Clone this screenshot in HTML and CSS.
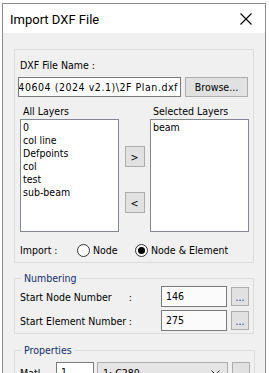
FILE: index.html
```html
<!DOCTYPE html>
<html lang="en">
<head>
  <meta charset="UTF-8">
  <title>Import DXF File</title>
  <link rel="stylesheet" href="styles.css">
</head>
<body>
  <div class="dialog">
    <!-- Title bar -->
    <div class="titlebar">
      <span class="title">Import DXF File</span>
      <svg class="close" width="12" height="12" viewBox="0 0 12 12">
        <path d="M0.5 0.5 L11.5 11.5 M11.5 0.5 L0.5 11.5" stroke="#000" stroke-width="1.1" fill="none"/>
      </svg>
    </div>

    <div class="client">
      <!-- File + layers -->
      <div class="group file-group">
        <div class="label file-label">DXF File Name :</div>
        <div class="file-row">
          <div class="edit file-path"><span>D:\MIDAS\Project\20240604 (2024 v2.1)\2F Plan.dxf</span></div>
          <button class="btn browse">Browse...</button>
        </div>

        <div class="layers">
          <div class="label layer-label">All Layers</div>
          <div></div>
          <div class="label layer-label">Selected Layers</div>

          <ul class="listbox">
            <li>0</li>
            <li>col line</li>
            <li>Defpoints</li>
            <li>col</li>
            <li>test</li>
            <li>sub-beam</li>
          </ul>
          <div class="move-btns">
            <button class="btn move">&gt;</button>
            <button class="btn move">&lt;</button>
          </div>
          <ul class="listbox">
            <li>beam</li>
          </ul>
        </div>

        <div class="import-row">
          <span class="import-label">Import :</span>
          <span class="radio radio-node"><span class="circle"></span>Node</span>
          <span class="radio radio-elem"><span class="circle checked"></span>Node &amp; Element</span>
        </div>
      </div>

      <!-- Numbering -->
      <fieldset class="group numbering">
        <legend>Numbering</legend>
        <div class="num-row">
          <span class="num-label"><span>Start Node Number</span><span>:</span></span>
          <div class="edit num-edit">146</div>
          <button class="btn dots">...</button>
        </div>
        <div class="num-row">
          <span class="num-label"><span>Start Element Number</span><span>:</span></span>
          <div class="edit num-edit">275</div>
          <button class="btn dots">...</button>
        </div>
      </fieldset>

      <!-- Properties -->
      <fieldset class="group properties">
        <legend>Properties</legend>
        <div class="prop-row">
          <span class="prop-label">Matl</span>
          <div class="edit matl-edit">1</div>
          <div class="combo">
            <span>1: C280</span>
            <svg width="9" height="6" viewBox="0 0 9 6">
              <path d="M0.5 0.5 L4.5 4.5 L8.5 0.5" stroke="#333" fill="none"/>
            </svg>
          </div>
          <button class="btn dots"></button>
        </div>
      </fieldset>
    </div>
  </div>
</body>
</html>
```

FILE: styles.css
```css
html, body {
  margin: 0;
  padding: 0;
  background-color: #fff;
  overflow: hidden;
}

body {
  font-family: "DejaVu Sans Condensed", "DejaVu Sans", sans-serif;
  font-stretch: condensed;
  font-size: 10.5px;
  color: #000;
  height: 373px;
}

.dialog {
  margin: 3px 0 0 2px;
  width: 264px;
  height: 370px;
  border: 1px solid #8c8c8c;
  border-bottom: none;
  box-sizing: border-box;
  background-color: #f0f0f0;
  overflow: hidden;
}

/* Title bar */
.titlebar {
  height: 29px;
  background-color: #fff;
  display: flex;
  align-items: center;
  justify-content: space-between;
  padding: 0 13px 0 7px;
}

.title {
  font-family: Roboto, sans-serif;
  font-stretch: normal;
  font-size: 13px;
  margin-top: 1px;
}

/* Client area */
.client {
  padding: 16px 0 0 11px;
}

.label {
  line-height: 14px;
  height: 14px;
}

.group {
  width: 240px;
  box-sizing: border-box;
  border: 1px solid #dcdcdc;
  margin: 0;
}

.file-group {
  padding: 8px 5px 4px 3px;
}

.file-label {
  margin-left: 2px;
}

.file-row {
  display: flex;
  gap: 4px;
  margin-top: 5px;
}

.edit {
  box-sizing: border-box;
  border: 1px solid #7a7a7a;
  background-color: #fff;
  height: 20px;
  line-height: 18px;
  white-space: nowrap;
  overflow: hidden;
}

.file-path {
  width: 163px;
  display: flex;
  justify-content: flex-end;
  padding-right: 2px;
  letter-spacing: 0.55px;
}

.btn {
  font-family: inherit;
  font-stretch: inherit;
  font-size: 10.5px;
  color: #000;
  background-color: #e1e1e1;
  border: 1px solid #adadad;
  box-sizing: border-box;
  padding: 0;
  margin: 0;
}

.browse {
  width: 63px;
  height: 20px;
}

/* Layer lists */
.layers {
  display: grid;
  grid-template-columns: 99px 31px 99px;
  grid-template-rows: 14px 113px;
  row-gap: 1px;
  margin: 7px 0 0 2px;
}

.layer-label {
  margin-left: 3px;
}

.listbox {
  list-style: none;
  margin: 0;
  padding: 1px 0 0 2px;
  box-sizing: border-box;
  border: 1px solid #828790;
  background-color: #fff;
  height: 113px;
}

.listbox li {
  line-height: 13px;
  height: 13px;
}

.move-btns {
  display: flex;
  flex-direction: column;
  align-items: center;
  gap: 25px;
  padding-top: 27px;
}

.move {
  width: 20px;
  height: 21px;
}

/* Import radio row */
.import-row {
  display: flex;
  align-items: center;
  height: 16px;
  margin: 10px 0 0 2px;
}

.import-label {
  width: 57px;
}

.radio {
  display: flex;
  align-items: center;
}

.radio-node {
  width: 58px;
}

.circle {
  width: 13px;
  height: 13px;
  box-sizing: border-box;
  border: 1px solid #333;
  border-radius: 50%;
  background-color: #fff;
  margin-right: 3px;
  display: flex;
  align-items: center;
  justify-content: center;
}

.circle.checked::after {
  content: "";
  width: 7px;
  height: 7px;
  border-radius: 50%;
  background-color: #000;
}

/* Group boxes with captions */
fieldset.group {
  padding: 0 4px 3px 5px;
}

fieldset.group legend {
  padding: 0 2px;
  margin-left: 2px;
  line-height: 14px;
  color: #142f6e;
}

.numbering {
  margin-top: 8px;
  height: 63px;
}

.num-row {
  display: flex;
  align-items: center;
  height: 21px;
  margin-top: 3px;
}

.num-row:first-of-type {
  margin-top: 1px;
}

.num-label {
  width: 112px;
  display: flex;
  justify-content: space-between;
  white-space: nowrap;
}

.num-edit {
  width: 66px;
  height: 21px;
  margin-left: 29px;
  padding-left: 4px;
  background-color: #fbfbfb;
}

.dots {
  width: 18px;
  height: 19px;
  margin-left: 4px;
  color: #2c2c7a;
  line-height: 12px;
}

.properties {
  margin-top: 9px;
  height: 60px;
}

.prop-row {
  display: flex;
  align-items: center;
  height: 21px;
  margin-top: 5px;
}

.prop-label {
  width: 36px;
}

.matl-edit {
  width: 38px;
  height: 21px;
  padding-left: 4px;
}

.combo {
  width: 131px;
  height: 21px;
  margin-left: 3px;
  box-sizing: border-box;
  border: 1px solid #adadad;
  background-color: #e5e5e5;
  display: flex;
  align-items: center;
  justify-content: space-between;
  padding: 0 7px 0 5px;
}

.prop-row .dots {
  height: 21px;
}
```
